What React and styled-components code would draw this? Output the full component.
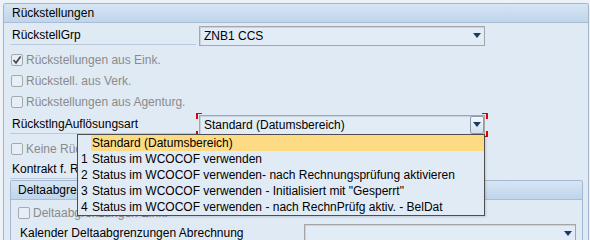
import React from "react";
import styled, { createGlobalStyle } from "styled-components";

const GlobalStyle = createGlobalStyle`
    html, body {
        margin: 0;
        padding: 0;
        background: #edf2f8;
        font-family: "Liberation Sans", Arial, sans-serif;
        font-size: 12px;
        color: #000;
        overflow: hidden;
    }
`;

const Panel = styled.div`
    margin: 3px 1px 0 3px;
    border: 1px solid #9fb5cf;
    border-bottom: none;
    border-radius: 3px 3px 0 0;
    background: #dfeaf5;
    height: 240px;
`;

const PanelHeader = styled.div`
    height: 18px;
    display: flex;
    align-items: center;
    padding-left: ${(p) => p.$pad || 8}px;
    background: linear-gradient(#d6e5f3, #bfd5eb);
    border-bottom: 1px solid #a9bed6;
    border-radius: 2px 2px 0 0;
`;

const Content = styled.div`
    padding: 2px 5px 0 6px;
    display: flex;
    flex-direction: column;
`;

const Row = styled.div`
    position: relative;
    display: flex;
    align-items: center;
    height: 21px;
    margin-top: ${(p) => p.$mt || 0}px;
    padding-left: ${(p) => p.$pl || 0}px;
    gap: 3px;
`;

const Label = styled.div`
    width: ${(p) => p.$w || 186}px;
    height: 19px;
    box-sizing: border-box;
    display: flex;
    align-items: center;
    padding-left: 2px;
    border-bottom: 1px solid #bccbdb;
    white-space: nowrap;
    overflow: hidden;
`;

const InputWrap = styled.div`
    position: relative;
    width: ${(p) => p.$w || 286}px;
    height: 20px;
`;

const Input = styled.div`
    width: 100%;
    height: 100%;
    box-sizing: border-box;
    border: 1px solid #a6a6a6;
    box-shadow: inset 1px 1px 0 #c9d3de;
    background: #e2ecf6;
    display: flex;
    align-items: center;
    padding-left: 4px;
    padding-right: 3px;
    white-space: nowrap;
`;

const InputText = styled.span`
    flex: 1;
`;

const Arrow = styled.svg`
    width: 8px;
    height: 5px;
    flex: none;
`;

const DropButton = styled.div`
    width: 14px;
    height: 18px;
    box-sizing: border-box;
    border: 1px solid #8e9aab;
    border-radius: 2px;
    background: linear-gradient(#f5f8fc, #d3dfec);
    display: flex;
    align-items: center;
    justify-content: center;
    margin-right: -3px;
`;

const Corner = styled.span`
    position: absolute;
    width: 4px;
    height: 5px;
    border-color: #e00000;
    border-style: solid;
    border-width: 0;
    ${(p) => (p.$top ? "top: -2px;" : "bottom: -2px;")}
    ${(p) => (p.$left ? "left: -3px;" : "right: -3px;")}
    ${(p) => (p.$top ? "border-top-width: 1px;" : "border-bottom-width: 1px;")}
    ${(p) => (p.$left ? "border-left-width: 2px;" : "border-right-width: 2px;")}
`;

const CheckRow = styled(Row)`
    gap: 3px;
    color: #8a8a8a;
    white-space: nowrap;
`;

const Box = styled.span`
    width: 12px;
    height: 12px;
    box-sizing: border-box;
    border: 1px solid #a5a9ae;
    border-radius: 2px;
    background: #e6eef7;
    display: flex;
    align-items: center;
    justify-content: center;
    flex: none;
`;

const List = styled.div`
    position: absolute;
    left: 67px;
    top: 20px;
    width: 408px;
    box-sizing: border-box;
    border: 1px solid #4e4e4e;
    background: #e1ebf6;
    z-index: 10;
    box-shadow: 1px 1px 2px rgba(0, 0, 0, 0.15);
`;

const Item = styled.div`
    display: flex;
    height: 16px;
    align-items: center;
`;

const Key = styled.span`
    width: 13px;
    padding-left: 3px;
    box-sizing: border-box;
    flex: none;
`;

const ItemText = styled.span`
    flex: 1;
    height: 100%;
    display: flex;
    align-items: center;
    padding-left: 1px;
    background: ${(p) => (p.$active ? "#fddb84" : "transparent")};
    white-space: nowrap;
`;

const SubPanel = styled.div`
    border: 1px solid #a3b9d2;
    border-bottom: none;
    border-radius: 3px 3px 0 0;
    height: 80px;
`;

const SubContent = styled.div`
    padding: 2px 6px 0 7px;
    display: flex;
    flex-direction: column;
`;

function DownArrow() {
    return (
        <Arrow viewBox="0 0 8 5">
            <path d="M0 0 H8 L4 5 Z" fill="#1e3866" />
        </Arrow>
    );
}

function Check({ checked }) {
    return (
        <Box>
            {checked && (
                <svg width="10" height="10" viewBox="0 0 10 10">
                    <path d="M1.5 5 L4 7.8 L8.6 1.4" stroke="#4a4a4a" strokeWidth="1.7" fill="none" />
                </svg>
            )}
        </Box>
    );
}

const items = [
    ["", "Standard (Datumsbereich)"],
    ["1", "Status im WCOCOF verwenden"],
    ["2", "Status im WCOCOF verwenden- nach Rechnungsprüfung aktivieren"],
    ["3", 'Status im WCOCOF verwenden - Initialisiert mit "Gesperrt"'],
    ["4", "Status im WCOCOF verwenden - nach RechnPrüfg aktiv. - BelDat"],
];

export default function App() {
    return (
        <>
            <GlobalStyle />
            <Panel>
                <PanelHeader>Rückstellungen</PanelHeader>
                <Content>
                    <Row>
                        <Label>RückstellGrp</Label>
                        <InputWrap>
                            <Input>
                                <InputText>ZNB1 CCS</InputText>
                                <DownArrow />
                            </Input>
                        </InputWrap>
                    </Row>
                    <CheckRow $mt={3} $pl={1}>
                        <Check checked />
                        Rückstellungen aus Eink.
                    </CheckRow>
                    <CheckRow $pl={1}>
                        <Check />
                        Rückstell. aus Verk.
                    </CheckRow>
                    <CheckRow $pl={1}>
                        <Check />
                        Rückstellungen aus Agenturg.
                    </CheckRow>
                    <Row $mt={2}>
                        <Label>RückstlngAuflösungsart</Label>
                        <InputWrap>
                            <Input>
                                <InputText>Standard (Datumsbereich)</InputText>
                                <DropButton>
                                    <DownArrow />
                                </DropButton>
                            </Input>
                            <Corner $top $left />
                            <Corner $top />
                            <Corner $left />
                            <Corner />
                        </InputWrap>
                        <List>
                            {items.map(([k, t], i) => (
                                <Item key={i}>
                                    <Key>{k}</Key>
                                    <ItemText $active={i === 0}>{t}</ItemText>
                                </Item>
                            ))}
                        </List>
                    </Row>
                    <CheckRow $mt={3} $pl={1}>
                        <Check />
                        Keine Rückstellungen
                    </CheckRow>
                    <Row>
                        <Label>Kontrakt f. Rückstellungen</Label>
                    </Row>
                    <SubPanel>
                        <PanelHeader $pad={7}>Deltaabgrenzungen</PanelHeader>
                        <SubContent>
                            <CheckRow>
                                <Check />
                                Deltaabgrenzungen Eink.
                            </CheckRow>
                            <Row>
                                <Label $w={284}>Kalender Deltaabgrenzungen Abrechnung</Label>
                                <InputWrap $w={272}>
                                    <Input>
                                        <InputText></InputText>
                                        <DownArrow />
                                    </Input>
                                </InputWrap>
                            </Row>
                        </SubContent>
                    </SubPanel>
                </Content>
            </Panel>
        </>
    );
}
